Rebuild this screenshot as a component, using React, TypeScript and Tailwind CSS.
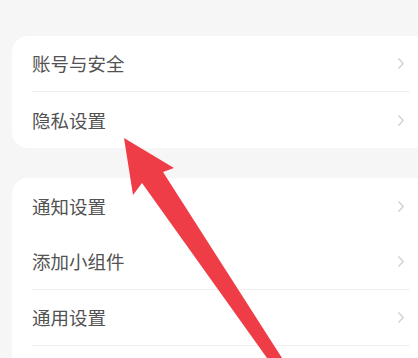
const groups = [
  ['账号与安全', '隐私设置'],
  ['通知设置', '添加小组件', '通用设置', ''],
];

function Chevron() {
  return (
    <svg width="8" height="13" viewBox="0 0 8 13" fill="none" className="mr-[5px]">
      <path d="M1.8 1.8 L6.2 6.5 L1.8 11.2" stroke="#d2d2d2" strokeWidth="1.4" strokeLinecap="round" strokeLinejoin="round" />
    </svg>
  );
}

export default function App() {
  return (
    <div
      className="relative h-[358px] w-[418px] overflow-hidden bg-[#f6f6f6] pt-9"
      style={{ fontFamily: '"Noto Sans CJK SC", "Noto Sans", sans-serif' }}
    >
      <div className="flex flex-col gap-[30px]">
        {groups.map((rows, gi) => (
          <div key={gi} className="ml-3 w-[420px] rounded-2xl bg-white pl-5 pr-[22px]">
            {rows.map((label, i) => (
              <div
                key={i}
                className={`flex h-14 items-center justify-between ${
                  i < rows.length - 1 && !(gi === 1 && i === 0) ? 'border-b border-[#efefef]' : ''
                }`}
              >
                {label && (
                  <>
                    <span className="text-[18.5px] leading-none text-[#525252]">{label}</span>
                    <Chevron />
                  </>
                )}
              </div>
            ))}
          </div>
        ))}
      </div>

      <svg className="pointer-events-none absolute left-0 top-0" width="418" height="358" viewBox="0 0 418 358">
        <polygon
          points="124,138 174,168 163,172 282,358 267,358 142,183 133,195"
          fill="#ef3d48"
        />
      </svg>
    </div>
  );
}
